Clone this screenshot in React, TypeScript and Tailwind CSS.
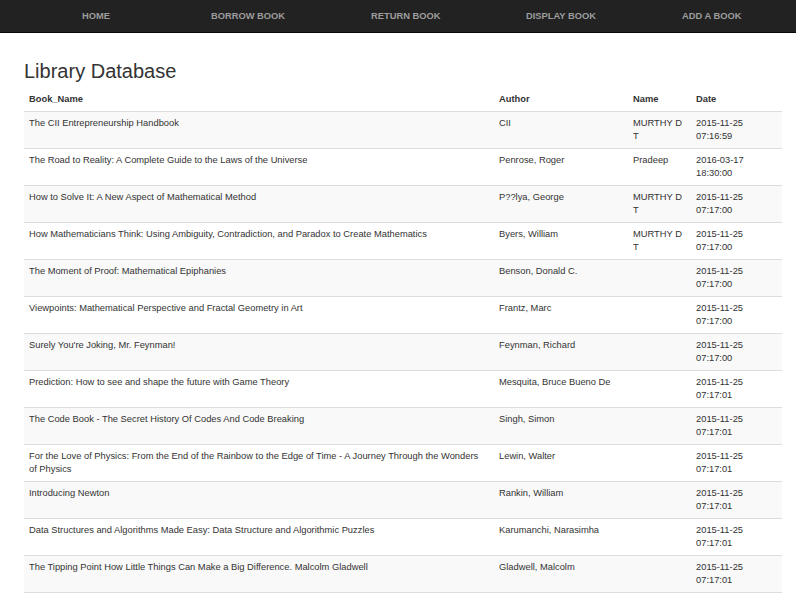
const navItems = [
  { label: 'Home', w: 'w-[129px]' },
  { label: 'Borrow Book', w: 'w-[160px]' },
  { label: 'Return Book', w: 'w-[155px]' },
  { label: 'Display Book', w: 'w-[156px]' },
  { label: 'Add a Book', w: 'w-[70px]' },
];

type Row = { book: string; author: string; name: string; date: string };

const rows: Row[] = [
  { book: 'The CII Entrepreneurship Handbook', author: 'CII', name: 'MURTHY D T', date: '2015-11-25 07:16:59' },
  { book: 'The Road to Reality: A Complete Guide to the Laws of the Universe', author: 'Penrose, Roger', name: 'Pradeep', date: '2016-03-17 18:30:00' },
  { book: 'How to Solve It: A New Aspect of Mathematical Method', author: 'P??lya, George', name: 'MURTHY D T', date: '2015-11-25 07:17:00' },
  { book: 'How Mathematicians Think: Using Ambiguity, Contradiction, and Paradox to Create Mathematics', author: 'Byers, William', name: 'MURTHY D T', date: '2015-11-25 07:17:00' },
  { book: 'The Moment of Proof: Mathematical Epiphanies', author: 'Benson, Donald C.', name: '', date: '2015-11-25 07:17:00' },
  { book: 'Viewpoints: Mathematical Perspective and Fractal Geometry in Art', author: 'Frantz, Marc', name: '', date: '2015-11-25 07:17:00' },
  { book: "Surely You're Joking, Mr. Feynman!", author: 'Feynman, Richard', name: '', date: '2015-11-25 07:17:00' },
  { book: 'Prediction: How to see and shape the future with Game Theory', author: 'Mesquita, Bruce Bueno De', name: '', date: '2015-11-25 07:17:01' },
  { book: 'The Code Book - The Secret History Of Codes And Code Breaking', author: 'Singh, Simon', name: '', date: '2015-11-25 07:17:01' },
  { book: 'For the Love of Physics: From the End of the Rainbow to the Edge of Time - A Journey Through the Wonders of Physics', author: 'Lewin, Walter', name: '', date: '2015-11-25 07:17:01' },
  { book: 'Introducing Newton', author: 'Rankin, William', name: '', date: '2015-11-25 07:17:01' },
  { book: 'Data Structures and Algorithms Made Easy: Data Structure and Algorithmic Puzzles', author: 'Karumanchi, Narasimha', name: '', date: '2015-11-25 07:17:01' },
  { book: 'The Tipping Point How Little Things Can Make a Big Difference. Malcolm Gladwell', author: 'Gladwell, Malcolm', name: '', date: '2015-11-25 07:17:01' },
];

export default function App() {
  return (
    <div className="min-h-screen bg-white text-[#333] font-['Liberation_Sans',Arial,sans-serif]">
      {/* Top navbar */}
      <nav className="h-[33px] bg-[#222] border-b border-[#080808]">
        <ul className="flex h-full items-center pl-[82px]">
          {navItems.map((item) => (
            <li
              key={item.label}
              className={`${item.w} shrink-0 text-[9.33px] leading-[13px] font-bold uppercase whitespace-nowrap text-[#9d9d9d]`}
            >
              <a href="#" className="block">
                {item.label}
              </a>
            </li>
          ))}
        </ul>
      </nav>

      <main className="px-[24px] pt-[27px]">
        <h2 className="text-[20px] leading-[22px] mb-[6px]">Library Database</h2>

        <table className="w-[758px] table-fixed border-collapse text-[9.33px] leading-[13px]">
          <colgroup>
            <col className="w-[470px]" />
            <col className="w-[134px]" />
            <col className="w-[63px]" />
            <col className="w-[91px]" />
          </colgroup>
          <thead>
            <tr className="border-b border-[#ddd]">
              <th className="px-[5px] py-[5px] text-left align-bottom font-bold">Book_Name</th>
              <th className="px-[5px] py-[5px] text-left align-bottom font-bold">Author</th>
              <th className="px-[5px] py-[5px] text-left align-bottom font-bold">Name</th>
              <th className="px-[5px] py-[5px] text-left align-bottom font-bold">Date</th>
            </tr>
          </thead>
          <tbody>
            {rows.map((r, i) => (
              <tr key={i} className={`border-b border-[#ddd] ${i % 2 === 0 ? 'bg-[#f9f9f9]' : 'bg-white'}`}>
                <td className="pl-[5px] pr-[10px] py-[5px] align-top">{r.book}</td>
                <td className="px-[5px] py-[5px] align-top">{r.author}</td>
                <td className="px-[5px] py-[5px] align-top">{r.name}</td>
                <td className="px-[5px] py-[5px] align-top">{r.date}</td>
              </tr>
            ))}
          </tbody>
        </table>
      </main>
    </div>
  );
}
